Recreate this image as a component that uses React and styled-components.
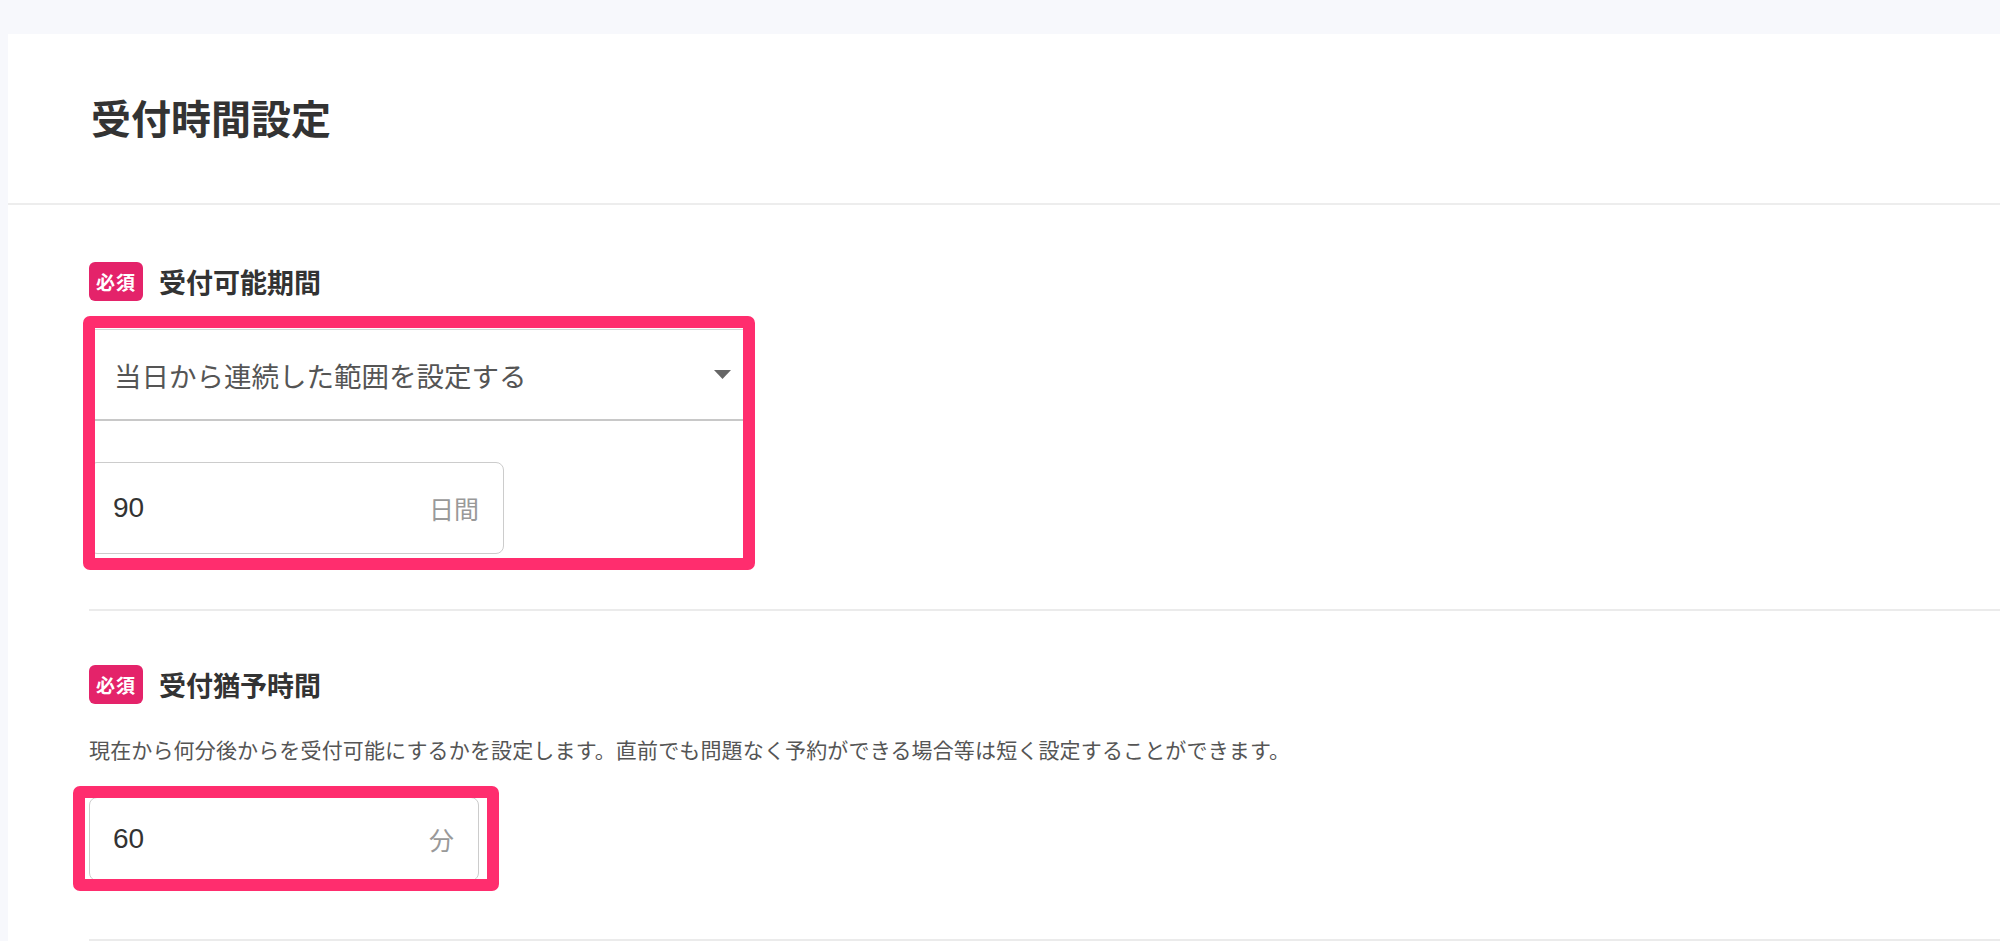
import React from "react";
import styled, { createGlobalStyle } from "styled-components";

const GlobalStyle = createGlobalStyle`
  html, body {
    margin: 0;
    padding: 0;
    background: #f7f8fc;
  }
  body {
    font-family: "Noto Sans CJK JP", "Noto Sans", sans-serif;
    color: #333;
  }
`;

const Page = styled.div`
  min-height: 100vh;
  padding: 34px 0 0 8px;
  box-sizing: border-box;
  background: #f7f8fc;
`;

const Card = styled.div`
  background: #fff;
  min-height: calc(100vh - 34px);
`;

const CardHeader = styled.div`
  height: 169px;
  padding-left: 83px;
  display: flex;
  align-items: center;
  border-bottom: 2px solid #ededed;
`;

const Title = styled.h1`
  margin: 0 0 3px;
  font-size: 40px;
  font-weight: 700;
  line-height: 1;
  color: #333;
`;

const CardBody = styled.div`
  padding-left: 81px;
`;

const Section = styled.section`
  padding-top: ${(p) => p.$top}px;
  padding-bottom: ${(p) => p.$bottom}px;
  border-bottom: 2px solid #ebebeb;
`;

const LabelRow = styled.div`
  display: flex;
  align-items: center;
  gap: 16px;
  height: 39px;
`;

const Badge = styled.span`
  display: inline-flex;
  align-items: center;
  justify-content: center;
  width: 54px;
  height: 39px;
  border-radius: 6px;
  background: #e4236a;
  color: #fff;
  font-size: 19px;
  font-weight: 700;
  letter-spacing: 1px;
`;

const Label = styled.span`
  font-size: 27px;
  font-weight: 700;
  color: #333;
  line-height: 1;
`;

const Description = styled.p`
  margin: 29px 0 32px;
  font-size: 21px;
  line-height: 32px;
  letter-spacing: 0.15px;
  color: #555;
`;

// pink annotation frame drawn over the grouped fields
const Highlight = styled.div`
  position: relative;
  width: ${(p) => p.$width}px;
  margin-top: ${(p) => p.$mt || 0}px;

  &::after {
    content: "";
    position: absolute;
    inset: ${(p) => p.$inset};
    border: 12px solid #ff2d6e;
    border-radius: 7px;
    pointer-events: none;
  }
`;

const Select = styled.div`
  box-sizing: border-box;
  width: 100%;
  height: 92px;
  padding: 0 12px 0 24px;
  display: flex;
  align-items: center;
  justify-content: space-between;
  border: 1px solid #d6d6d6;
  border-bottom: 2px solid #c8c8c8;
  background: #fff;
  font-size: 27.5px;
  color: #555;
`;

const Arrow = styled.svg`
  width: 17px;
  height: 9px;
  flex-shrink: 0;
`;

const NumberField = styled.div`
  box-sizing: border-box;
  width: ${(p) => p.$width}px;
  height: ${(p) => p.$height}px;
  margin-top: ${(p) => p.$mt || 0}px;
  padding: 0 24px 0 23px;
  display: flex;
  align-items: center;
  justify-content: space-between;
  border: 1px solid #cccccc;
  border-radius: 8px;
  background: #fff;
`;

const Value = styled.span`
  font-family: "Liberation Sans", "Noto Sans CJK JP", sans-serif;
  font-size: 28px;
  color: #333;
`;

const Unit = styled.span`
  font-size: 25px;
  color: #999;
`;

const Required = () => <Badge>必須</Badge>;

export default function App() {
  return (
    <>
      <GlobalStyle />
      <Page>
        <Card>
          <CardHeader>
            <Title>受付時間設定</Title>
          </CardHeader>
          <CardBody>
            <Section $top={57} $bottom={55}>
              <LabelRow>
                <Required />
                <Label>受付可能期間</Label>
              </LabelRow>
              <Highlight $width={655} $mt={28} $inset="-13px -11px -16px -6px">
                <Select>
                  <span>当日から連続した範囲を設定する</span>
                  <Arrow viewBox="0 0 17 9">
                    <polygon points="0,0 17,0 8.5,9" fill="#666" />
                  </Arrow>
                </Select>
                <NumberField $width={415} $height={92} $mt={41}>
                  <Value>90</Value>
                  <Unit>日間</Unit>
                </NumberField>
              </Highlight>
            </Section>
            <Section $top={54} $bottom={58}>
              <LabelRow>
                <Required />
                <Label>受付猶予時間</Label>
              </LabelRow>
              <Description>
                現在から何分後からを受付可能にするかを設定します。直前でも問題なく予約ができる場合等は短く設定することができます。
              </Description>
              <Highlight $width={390} $inset="-11px -20px -10px -16px">
                <NumberField $width={390} $height={84}>
                  <Value>60</Value>
                  <Unit>分</Unit>
                </NumberField>
              </Highlight>
            </Section>
          </CardBody>
        </Card>
      </Page>
    </>
  );
}
